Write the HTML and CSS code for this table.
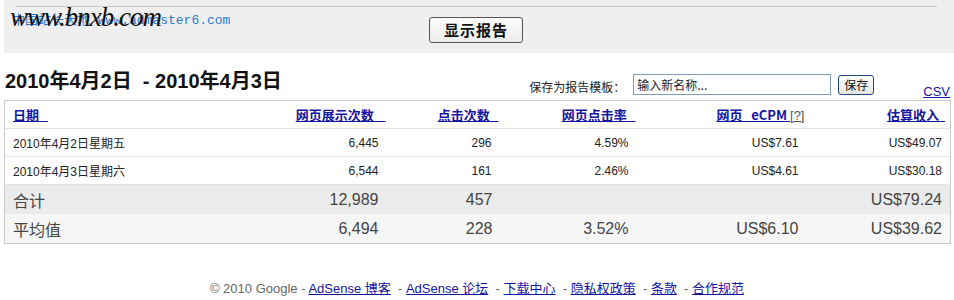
FILE: index.html
```html
<!DOCTYPE html>
<html lang="zh-CN">
<head>
<meta charset="utf-8">
<title>AdSense 报告</title>
<link rel="stylesheet" href="styles.css">
</head>
<body>
<div class="panel">
  <div class="rule"></div>
  <div class="btn-row"><button class="show-btn">显示报告</button></div>
  <div class="wm-url">中国站长天地 www.admaster6.com</div>
  <div class="wm-script">www.bnxb.com</div>
</div>

<div class="head-row">
  <h1 class="title">2010年4月2日&nbsp; - 2010年4月3日</h1>
  <div class="save">
    <span class="save-label">保存为报告模板：</span>
    <input class="save-input" type="text" value="输入新名称...">
    <button class="save-btn">保存</button>
  </div>
  <a class="csv" href="#">CSV</a>
</div>

<table class="report">
  <colgroup>
    <col class="c1"><col class="c2"><col class="c3"><col class="c4"><col class="c5"><col class="c6">
  </colgroup>
  <thead>
    <tr>
      <th class="l"><a href="#">日期&nbsp;&nbsp;&nbsp;</a></th>
      <th class="h2"><a href="#">网页展示次数&nbsp;&nbsp;&nbsp;&nbsp;</a></th>
      <th class="h3"><a href="#">点击次数&nbsp;&nbsp;&nbsp;</a></th>
      <th class="h4"><a href="#">网页点击率&nbsp;&nbsp;&nbsp;</a></th>
      <th class="h5"><a href="#">网页&nbsp;&nbsp; eCPM </a><a class="q" href="#">[?]</a></th>
      <th class="h6"><a href="#">估算收入&nbsp;&nbsp;</a></th>
    </tr>
  </thead>
  <tbody>
    <tr class="d">
      <td class="l">2010年4月2日星期五</td><td>6,445</td><td>296</td><td>4.59%</td><td>US$7.61</td><td>US$49.07</td>
    </tr>
    <tr class="d">
      <td class="l">2010年4月3日星期六</td><td>6,544</td><td>161</td><td>2.46%</td><td>US$4.61</td><td>US$30.18</td>
    </tr>
    <tr class="total">
      <td class="l">合计</td><td>12,989</td><td>457</td><td></td><td></td><td>US$79.24</td>
    </tr>
    <tr class="avg">
      <td class="l">平均值</td><td>6,494</td><td>228</td><td>3.52%</td><td>US$6.10</td><td>US$39.62</td>
    </tr>
  </tbody>
</table>

<div class="footer">
  © 2010 Google - <a href="#">AdSense 博客</a> &nbsp;- <a href="#">AdSense 论坛</a> &nbsp;- <a href="#">下载中心</a> &nbsp;- <a href="#">隐私权政策</a> &nbsp;- <a href="#">条款</a> &nbsp;- <a href="#">合作规范</a>
</div>
</body>
</html>
```
FILE: styles.css
```css
html, body {
  margin: 0;
  padding: 0;
  background: #fff;
}
body {
  padding: 0 4px;
  font-family: "Liberation Sans", Arial, "Noto Sans CJK SC", sans-serif;
  color: #222;
}
.panel {
  position: relative;
  background: #efefef;
  height: 53px;
  margin-right: -4px;
  padding-top: 6px;
  box-sizing: border-box;
}
.rule {
  height: 1px;
  background: #c9c9c9;
  margin: 0 17px 0 12px;
}
.btn-row {
  display: flex;
  justify-content: center;
  padding-top: 10px;
  padding-right: 6px;
}
.show-btn {
  width: 94px;
  height: 26px;
  border: 1px solid #555;
  border-radius: 3px;
  background: linear-gradient(#fbfbfb, #ececec);
  font-family: "Noto Sans CJK SC", sans-serif;
  font-weight: 700;
  font-size: 15px;
  color: #111;
  padding: 0;
  line-height: 22px;
  letter-spacing: 1px;
}
.wm-script {
  position: absolute;
  left: 6px;
  top: 2px;
  font-family: "Liberation Serif", "DejaVu Serif", serif;
  font-style: italic;
  font-size: 27px;
  letter-spacing: -1px;
  color: #111;
}
.wm-url {
  position: absolute;
  left: 8px;
  top: 9px;
  font-family: "Liberation Mono", "Noto Sans CJK SC", monospace;
  font-size: 13px;
  color: #2a7bd0;
}
.head-row {
  display: flex;
  align-items: flex-end;
  height: 47px;
}
.title {
  margin: 0;
  font-size: 20px;
  font-weight: 700;
  color: #111;
  padding-bottom: 6px;
  padding-left: 1px;
  flex: 1;
}
.save {
  display: flex;
  align-items: center;
  padding-bottom: 5px;
  margin-right: 49px;
}
.save-label {
  font-family: "Noto Sans CJK SC", sans-serif;
  font-size: 12px;
  color: #222;
  margin-right: 8px;
  padding-top: 4px;
}
.save-input {
  width: 198px;
  height: 21px;
  box-sizing: border-box;
  border: 1px solid #7f9db9;
  padding: 0 3px;
  font-family: "Noto Sans CJK SC", sans-serif;
  font-size: 12px;
  color: #222;
  margin-right: 7px;
}
.save-btn {
  width: 36px;
  height: 20px;
  box-sizing: border-box;
  border: 1px solid #1c4a8a;
  border-radius: 3px;
  background: linear-gradient(#ffffff, #e6e6e0);
  font-family: "Noto Sans CJK SC", sans-serif;
  font-size: 12px;
  padding: 0;
  line-height: 16px;
  color: #111;
}
.csv {
  font-size: 13px;
  color: #1515a0;
  padding-bottom: 1px;
  margin-right: 0;
}
.report {
  width: 946px;
  border-collapse: collapse;
  table-layout: fixed;
  border: 1px solid #c8c8c8;
}
.c1 { width: 266px; }
.c2 { width: 116px; }
.c3 { width: 114px; }
.c4 { width: 136px; }
.c5 { width: 170px; }
.c6 { width: 144px; }
.report th {
  height: 27px;
  text-align: right;
  padding: 0 2px 0 0;
  font-family: "Noto Sans CJK SC", sans-serif;
  font-size: 13px;
  font-weight: 700;
  border-bottom: 1px solid #e2e2e2;
}
.report th a {
  color: #1515a0;
  text-decoration: underline;
}
.report th.h2 { padding-right: 1px; }
.report th.h3 { padding-right: 2px; }
.report th.h4 { padding-right: 1px; }
.report th.h5 { padding-right: 2px; }
.report th .q {
  font-family: "Liberation Sans", Arial, sans-serif;
  font-weight: 400;
  color: #555;
}
.report th.h6 { padding-right: 5px; }
.report th.l, .report td.l {
  text-align: left;
  padding-left: 8px;
}
.report td {
  text-align: right;
  padding: 0 8px 0 0;
  font-family: "Liberation Sans", Arial, "Noto Sans CJK SC", sans-serif;
}
.report tr.d td {
  height: 27px;
  font-size: 12px;
  color: #222;
  border-bottom: 1px solid #e2e2e2;
}
.report tr.total td {
  height: 29px;
  font-size: 16px;
  color: #444;
  background: #ebebeb;
}
.report tr.avg td {
  height: 29px;
  font-size: 16px;
  color: #444;
  background: #f6f6f6;
}
.report tr.d td:nth-child(3) { padding-right: 9px; }
.report tr.d td:nth-child(4), .report tr.avg td:nth-child(4) { padding-right: 8px; }
.footer {
  text-align: center;
  margin-top: 34px;
  font-size: 13px;
  color: #666;
}
.footer a {
  color: #1515a0;
  text-decoration: underline;
  font-family: "Liberation Sans", Arial, "Noto Sans CJK SC", sans-serif;
}
```
